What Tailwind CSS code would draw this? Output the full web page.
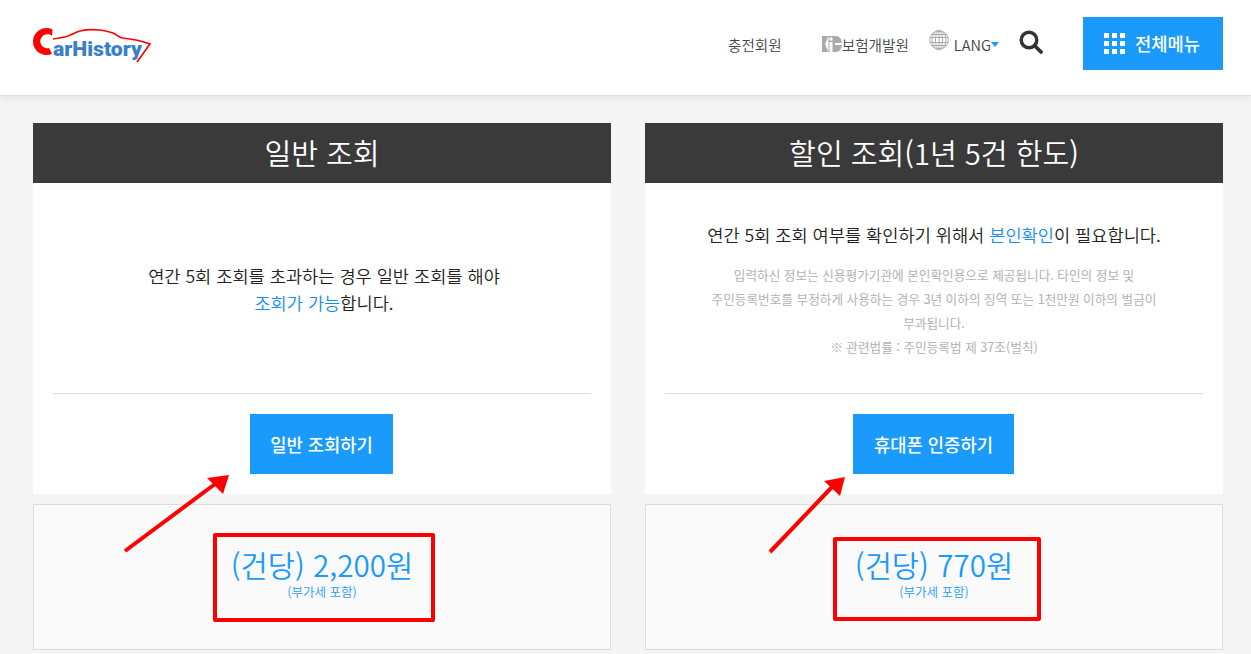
<!DOCTYPE html>
<html lang="ko">

<head>
    <meta charset="UTF-8">
    <meta name="viewport" content="width=device-width, initial-scale=1.0">
    <title>CarHistory</title>
    <script src="https://cdn.jsdelivr.net/npm/@tailwindcss/browser@4"></script>
</head>

<body class="relative h-[654px] overflow-hidden bg-[#f4f4f4] font-['Noto_Sans_CJK_KR','Noto_Sans',sans-serif] text-[#333]">
    <!-- header -->
    <header class="relative z-10 flex h-[96px] items-center justify-between border-b border-[#dedede] bg-white pb-[8px] pl-[32px] pr-[28px] shadow-[0_2px_8px_rgba(0,0,0,0.07)]">
        <svg width="122" height="40" viewBox="0 0 122 40" class="mt-[6px]" aria-label="CarHistory">
            <path d="M20.500 2.400A13.500 13.500 0 1 0 20 26.800L17 21A7 7 0 1 1 20 9Z" fill="#f00" />
            <path d="M21 12C28 11 33 10 36 9C41 7 44 5 48 4C54 2.500 62 2.500 68 3C74 3.500 78 5 81 6C84 7.500 87 10 90 11C100 12 110 14 118 17L105 35" fill="none" stroke="#f00" stroke-width="1.700" />
            <text x="21" y="29" font-family="Roboto, sans-serif" font-size="21" font-weight="900" fill="#3a80c9" textLength="89" lengthAdjust="spacingAndGlyphs">arHistory</text>
        </svg>
        <nav class="flex items-center text-[14.600px] font-[350] text-[#444]">
            <a class="mr-[40px] mt-[2px]">충전회원</a>
            <a class="mr-[20px] mt-[2px] flex items-center">
                <svg width="20" height="16" viewBox="0 0 20 16">
                    <path d="M0 0H14C18 0 20 4 20 8C20 12 18 16 14 16H0Z" fill="#aaa" />
                    <path d="M6.500 0L3 8L6.500 16Z" fill="#fff" />
                    <circle cx="9" cy="3" r="1.700" fill="#fff" />
                    <path d="M7.500 6H10.500V16H7.500ZM13 7H20V9H13Z" fill="#fff" />
                </svg>
                <span>보험개발원</span>
            </a>
            <svg width="20" height="20" viewBox="0 0 20 20" fill="none" stroke="#aaa" stroke-width="1" class="mt-[-8px]">
                <circle cx="10" cy="10" r="9.300" />
                <ellipse cx="10" cy="10" rx="3.500" ry="9.300" />
                <ellipse cx="10" cy="10" rx="7" ry="9.300" />
                <path d="M10 0.700V19.300M2.500 4.500H17.500M1 7.500H19M1 12.500H19M2.500 15.500H17.500" />
            </svg>
            <span class="ml-[5px] mt-[2px]">LANG</span>
            <span class="mt-[1px] h-0 w-0 border-x-[4.500px] border-t-[5px] border-x-transparent border-t-[#1a9bfc]"></span>
            <svg width="24" height="24" viewBox="0 0 24 24" fill="none" stroke="#333" class="ml-[20px] mr-[40px] mt-[-3px]">
                <circle cx="10" cy="10" r="7.800" stroke-width="3.400" />
                <path d="M15.500 15.500L22 22" stroke-width="3.800" stroke-linecap="round" />
            </svg>
            <button class="flex h-[53px] w-[140px] items-center justify-center gap-[10px] bg-[#1a9bfc] pr-[2px] text-[17.700px] font-medium text-white">
                <span class="grid grid-cols-3 gap-[3px]">
                    <i class="size-[5px] bg-white"></i><i class="size-[5px] bg-white"></i><i class="size-[5px] bg-white"></i>
                    <i class="size-[5px] bg-white"></i><i class="size-[5px] bg-white"></i><i class="size-[5px] bg-white"></i>
                    <i class="size-[5px] bg-white"></i><i class="size-[5px] bg-white"></i><i class="size-[5px] bg-white"></i>
                </span>
                전체메뉴
            </button>
        </nav>
    </header>

    <main class="grid grid-cols-2 gap-[34px] pl-[33px] pr-[28px] pt-[27px]">
        <!-- 일반 조회 -->
        <section>
            <h2 class="flex h-[60px] items-center justify-center bg-[#3a3a3a] text-[29.100px] font-[350] text-white">일반 조회</h2>
            <div class="h-[311px] bg-white px-[20px]">
                <div class="flex h-[211px] flex-col items-center justify-center border-b border-[#ddd] pl-[4px] pt-[1px] text-[17.600px] font-[350] leading-[27px] text-[#222]">
                    <p>연간 5회 조회를 초과하는 경우 일반 조회를 해야</p>
                    <p><span class="text-[#1a8cf0]">조회가 가능</span>합니다.</p>
                </div>
                <a class="ml-[197px] mt-[20px] flex h-[60px] w-[143px] items-center justify-center bg-[#1a9bfc] text-[17.700px] font-medium text-white">일반 조회하기</a>
            </div>
            <div class="mt-[10px] flex h-[146px] flex-col items-center border border-[#ddd] bg-[#fafafa] pt-[39px] text-[#1a9bfc]">
                <p class="text-[29.600px] font-[350] leading-[41px]">(건당) 2,200원</p>
                <p class="text-[12.500px] font-[350] leading-[14px]">(부가세 포함)</p>
            </div>
        </section>

        <!-- 할인 조회 -->
        <section>
            <h2 class="flex h-[60px] items-center justify-center bg-[#3a3a3a] text-[29.100px] font-[350] text-white">할인 조회(1년 5건 한도)</h2>
            <div class="h-[311px] bg-white px-[20px]">
                <div class="flex h-[211px] flex-col items-center border-b border-[#ddd] pt-[37px] text-center">
                    <p class="text-[17.600px] font-[350] leading-[30px] text-[#222]">연간 5회 조회 여부를 확인하기 위해서 <span class="text-[#1a8cf0]">본인확인</span>이 필요합니다.</p>
                    <p class="mt-[13px] text-[12.650px] leading-[24px] text-[#b2b2b2]">입력하신 정보는 신용평가기관에 본인확인용으로 제공됩니다. 타인의 정보 및<br>주민등록번호를 부정하게 사용하는 경우 3년 이하의 징역 또는 1천만원 이하의 벌금이<br>부과됩니다.<br>※ 관련법률 : 주민등록법 제 37조(벌칙)</p>
                </div>
                <a class="ml-[188px] mt-[20px] flex h-[60px] w-[161px] items-center justify-center bg-[#1a9bfc] text-[17.700px] font-medium text-white">휴대폰 인증하기</a>
            </div>
            <div class="mt-[10px] flex h-[146px] flex-col items-center border border-[#ddd] bg-[#fafafa] pt-[39px] text-[#1a9bfc]">
                <p class="text-[29.600px] font-[350] leading-[41px]">(건당) 770원</p>
                <p class="text-[12.500px] font-[350] leading-[14px]">(부가세 포함)</p>
            </div>
        </section>
    </main>

    <!-- red markup drawn over the page -->
    <div class="absolute left-[213px] top-[533px] h-[89px] w-[222px] rounded-[2px] border-[4px] border-[#f00]"></div>
    <div class="absolute left-[833px] top-[537px] h-[84px] w-[208px] rounded-[2px] border-[4px] border-[#f00]"></div>
    <svg class="absolute left-0 top-0" width="1251" height="654" fill="#f00" stroke="none">
        <path d="M125 551L215 484" stroke="#f00" stroke-width="4" />
        <path d="M229 475L207 478L223 494Z" />
        <path d="M770 552L832 487" stroke="#f00" stroke-width="4" />
        <path d="M845 477L824 481L840 496Z" />
    </svg>
</body>

</html>
